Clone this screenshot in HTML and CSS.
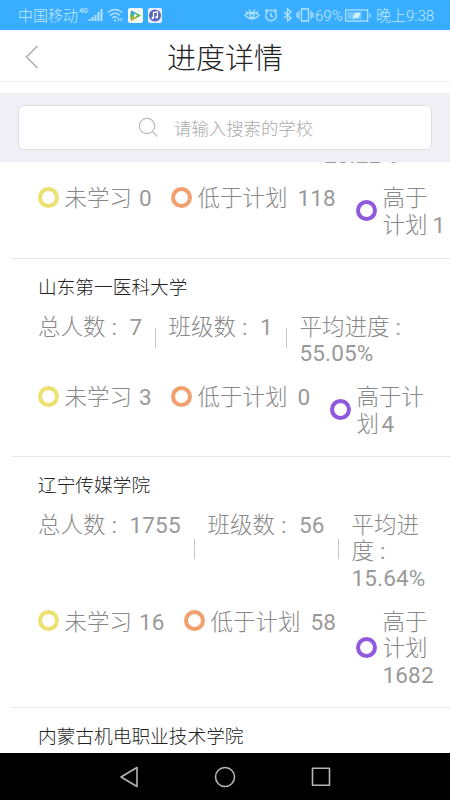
FILE: index.html
```html
<!DOCTYPE html>
<html lang="zh-CN">
<head>
<meta charset="utf-8">
<title>进度详情</title>
<link rel="stylesheet" href="styles.css">
</head>
<body>
<div class="phone">
  <div class="status">
    <span class="carrier">中国移动</span>
    <span class="net">4G</span>
    <svg class="signal" width="15" height="14" viewBox="0 0 15 14"><path d="M1.5 13v-2M4.5 13V9M7.5 13V7M10.5 13V4M13.5 13V1"/></svg>
    <svg class="wifi" width="16" height="14" viewBox="0 0 16 14"><path d="M.7 4.500Q8-1.500 15.300 4.500M3 7.500Q8 3 13 7.500M5.300 10Q8 7.500 10 10"/><path d="M7 12.500h2M11.500 13v-3M14.200 13v-3"/></svg>
    <svg class="app" width="15" height="15" viewBox="0 0 15 15"><rect width="15" height="15" rx="2" fill="#f2faf3"/><path d="M3 2.500L13 7.500L3 13Q1.500 7.500 3 2.500Z" fill="#55b948"/><path d="M3 2.500L9 5.500L4 8Z" fill="#36a6dc"/><path d="M3 13L4 8L9 9.500Z" fill="#c5b030"/><path d="M6 5.500L9.500 7.500L6 9.500Z" fill="#fff"/></svg>
    <svg class="app" width="14" height="15" viewBox="0 0 14 15"><rect width="14" height="15" rx="2" fill="#e9efff"/><circle cx="7" cy="7.500" r="6" fill="#5864bd"/><path d="M5.500 10V4.500L9.500 3.700V9" fill="none" stroke="#fff"/><circle cx="4.700" cy="10" r="1.200" fill="#fff"/><circle cx="8.700" cy="9.300" r="1.200" fill="#fff"/></svg>
    <span class="fill"></span>
    <svg class="eye" width="16" height="14" viewBox="0 0 16 14"><path d="M1 7.500Q8 1 15 7.500Q8 14 1 7.500ZM2 3.500L3.500 5.500M5 1.500L6 3.500M11 1.500L10 3.500M14 3.500L12.500 5.500"/><circle cx="8" cy="7.500" r="2"/></svg>
    <svg class="alarm" width="14" height="14" viewBox="0 0 14 14"><circle cx="7" cy="7.500" r="5.300"/><path d="M7 4.500v3.500l2 1M1 3.500L3.500 1M13 3.500L10.500 1"/></svg>
    <svg class="bt" width="9" height="14" viewBox="0 0 9 14"><path d="M1 4L8 10L4.500 13V1L8 4L1 10"/></svg>
    <svg class="vib" width="18" height="14" viewBox="0 0 18 14"><path d="M5.500 1h7v12h-7ZM3 3v8M15 3v8M1 4.500v5M17 4.500v5"/></svg>
    <span class="pct">69%</span>
    <svg class="batt" width="26" height="13" viewBox="0 0 26 13"><rect x=".6" y="1" width="22" height="11"/><path d="M25 4.500v4"/><rect x="2.500" y="3" width="14" height="7" class="charge"/><path class="leaf" d="M8 9Q8 3 15.500 3.500Q15 10 9.500 9L8 11Z"/></svg>
    <span class="clock">晚上9:38</span>
  </div>
  <div class="title-bar">
    <svg class="back" width="14" height="24" viewBox="0 0 14 24"><path d="M12.500 1L1.500 12L12.500 23"/></svg>
    <h1>进度详情</h1>
  </div>
  <div class="search-bar">
    <div class="search">
      <svg width="21" height="21" viewBox="0 0 21 21"><circle cx="9" cy="9" r="7.700"/><path d="M14.500 14.500L19.500 19.500"/></svg>
      <span>请输入搜索的学校</span>
    </div>
  </div>
  <div class="list">
    <section class="school first">
      <div class="legend cols-a">
        <div class="item"><i class="ring yellow"></i><p>未学习 <b>0</b></p></div>
        <div class="item"><i class="ring orange"></i><p>低于计划 <b class="wide">118</b></p></div>
        <div class="item"><i class="ring purple"></i><p>高于<br>计划<b class="tight">1</b></p></div>
      </div>
      <div class="peek"><b>23.22%</b></div>
    </section>
    <section class="school">
      <h2>山东第一医科大学</h2>
      <div class="stats stats-b">
        <p>总人数<span class="colon">:</span><b>7</b></p>
        <div class="ruled"><p>班级数<span class="colon">:</span><b>1</b></p></div>
        <div class="ruled"><p>平均进度<span class="colon">:</span><br><b>55.05%</b></p></div>
      </div>
      <div class="legend cols-b">
        <div class="item"><i class="ring yellow"></i><p>未学习 <b>3</b></p></div>
        <div class="item"><i class="ring orange"></i><p>低于计划 <b class="wide">0</b></p></div>
        <div class="item"><i class="ring purple"></i><p>高于计<br>划<b class="near">4</b></p></div>
      </div>
    </section>
    <section class="school">
      <h2>辽宁传媒学院</h2>
      <div class="stats stats-c">
        <p>总人数<span class="colon">:</span><b>1755</b></p>
        <div class="ruled"><p>班级数<span class="colon">:</span><b>56</b></p></div>
        <div class="ruled"><p>平均进<br>度<span class="colon">:</span><br><b>15.64%</b></p></div>
      </div>
      <div class="legend cols-c">
        <div class="item"><i class="ring yellow"></i><p>未学习 <b>16</b></p></div>
        <div class="item"><i class="ring orange"></i><p>低于计划 <b class="wide">58</b></p></div>
        <div class="item"><i class="ring purple"></i><p>高于<br>计划<br><b class="flush">1682</b></p></div>
      </div>
    </section>
    <section class="school"><h2>内蒙古机电职业技术学院</h2></section>
  </div>
  <div class="nav">
    <svg width="20" height="22" viewBox="0 0 20 22"><path d="M18 1.500V20.500L2 11Z"/></svg>
    <svg width="22" height="22" viewBox="0 0 22 22"><circle cx="11" cy="11" r="9.500"/></svg>
    <svg width="20" height="22" viewBox="0 0 20 22"><rect x="1.500" y="2.300" width="17" height="17"/></svg>
  </div>
</div>
</body>
</html>
```
FILE: styles.css
```css
* { box-sizing: border-box; margin: 0; padding: 0; }
body { width: 450px; height: 800px; overflow: hidden; background: #fff; font-family: Roboto, "Noto Sans CJK SC", sans-serif; font-weight: 300; }
svg { display: block; flex: none; fill: none; }
.phone { height: 800px; display: flex; flex-direction: column; }

.status { height: 30px; flex: none; display: flex; align-items: center; padding: 0 15px 0 18px; background: #39adff; color: #c2e9ff; font-size: 15px; line-height: 30px; white-space: nowrap; }
.status svg { stroke: #b5e3ff; stroke-width: 1.3; }
.status .app { stroke: none; margin-left: 5px; }
.carrier { width: 61px; padding-top: 1px; }
.net { width: 9px; font-size: 7px; line-height: 10px; font-weight: 500; align-self: flex-start; padding-top: 6px; }
.status .signal { stroke-width: 2; }
.wifi { margin-left: 4px; }
.fill { flex: 1; }
.alarm { margin-left: 4px; }
.bt { margin-left: 5px; }
.vib { margin-left: 4px; }
.pct { width: 30px; margin-left: 1px; font-weight: 300; padding-top: 1px; }
.charge { fill: #74c7ff; stroke: none; }
.leaf { fill: #d4f0ff; stroke: none; }
.clock { width: 59px; margin-left: 5px; padding-top: 1px; }

.title-bar { height: 52px; flex: none; display: flex; align-items: center; padding: 2px 0 0 25px; border-bottom: 1px solid #eee; }
.back { stroke: #aaa; stroke-width: 1.4; }
.title-bar h1 { width: 117px; margin-left: 128px; padding-top: 4px; font-size: 29px; line-height: 40px; font-weight: 300; color: #222; white-space: nowrap; }

.search-bar { height: 69px; flex: none; margin-top: 11px; padding: 12px 18px; background: #efeff5; }
.search { height: 45px; display: flex; align-items: center; padding-left: 119px; border: 1px solid #e0e0e4; border-radius: 6px; background: #fff; }
.search svg { stroke: #bbb; stroke-width: 1.2; }
.search span { margin-left: 15px; font-size: 17.4px; color: #aaa; }

.list { flex: 1; min-height: 0; overflow: hidden; }
.school { position: relative; margin-left: 12px; padding: 16px 0 19px 26px; border-top: 1px solid #e6e6e6; }
.school.first { border: 0; padding-top: 23px; padding-bottom: 20px; }
.school h2 { font-size: 18.7px; line-height: 26px; font-weight: 300; color: #222; }
.school b { font-weight: 400; letter-spacing: .15px; color: #999; }
.stats, .legend { display: grid; font-size: 22.5px; line-height: 26.5px; color: #888; white-space: nowrap; }
.stats { margin-top: 12.5px; }
.stats-b { grid-template-columns: 117px 131px 1fr; }
.stats-c { grid-template-columns: 156px 144px 1fr; }
.colon { display: inline-block; width: 24px; padding-left: 6px; font-weight: 400; color: #999; }
.ruled { display: flex; align-items: flex-start; }
.ruled::before { content: ""; width: 1px; height: 20px; flex: none; align-self: center; margin: 0 12.5px 4px 0; background: #c4c4c4; }
.legend { margin-top: 17.5px; }
.school.first .legend { margin-top: 0; }
.cols-a { grid-template-columns: 133px 185px 1fr; }
.cols-b { grid-template-columns: 133px 159px 1fr; }
.cols-c { grid-template-columns: 146px 172px 1fr; }
.item { display: flex; align-items: center; align-self: start; }
.ring { width: 21px; height: 21px; flex: none; margin: 0 5.5px 2px 0; border: 4px solid; border-radius: 50%; }
.yellow { border-color: #ece070; }
.orange { border-color: #f2a06e; }
.purple { border-color: #9058dc; }
.item b { margin-left: 1.5px; }
.item .wide { margin-left: 4.5px; }
.item .tight { margin-left: 5px; }
.item .near { margin-left: 2.5px; }
.item .flush { margin-left: 0; }
.peek { position: absolute; left: 312px; top: -20px; font-size: 22.5px; line-height: 26px; }

.nav { height: 47px; flex: none; display: flex; align-items: center; justify-content: center; gap: 75px; background: #000; }
.nav svg { stroke: #b5b5b5; stroke-width: 1.6; stroke-linejoin: round; }
```
